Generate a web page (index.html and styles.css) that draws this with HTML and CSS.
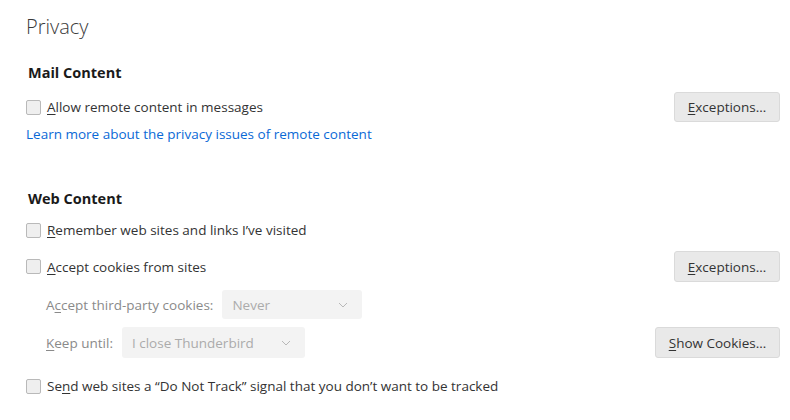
FILE: index.html
```html
<!DOCTYPE html>
<html>
<head>
<meta charset="utf-8">
<link rel="stylesheet" href="styles.css">
</head>
<body>
<div class="page">
  <h1 class="title">Privacy</h1>

  <h2 class="group">Mail Content</h2>
  <div class="row row-btn">
    <label class="check"><span class="box"></span><span><u>A</u>llow remote content in messages</span></label>
    <button class="btn btn-exc"><u>E</u>xceptions…</button>
  </div>
  <a class="link" href="#">Learn more about the privacy issues of remote content</a>

  <h2 class="group group-web">Web Content</h2>
  <div class="row row-plain">
    <label class="check"><span class="box"></span><span><u>R</u>emember web sites and links I’ve visited</span></label>
  </div>
  <div class="row row-btn row-cookies">
    <label class="check"><span class="box"></span><span><u>A</u>ccept cookies from sites</span></label>
    <button class="btn btn-exc"><u>E</u>xceptions…</button>
  </div>
  <div class="row row-sub row-third">
    <span class="sublabel">A<u>c</u>cept third-party cookies:</span>
    <span class="select select-never"><span>Never</span><svg class="chev" width="10" height="6" viewBox="0 0 10 6"><path d="M1 1 L5 5 L9 1" fill="none" stroke="#b8b8b8" stroke-width="1"/></svg></span>
  </div>
  <div class="row row-sub row-keep">
    <div class="subleft">
      <span class="sublabel"><u>K</u>eep until:</span>
      <span class="select select-keep"><span>I close Thunderbird</span><svg class="chev" width="10" height="6" viewBox="0 0 10 6"><path d="M1 1 L5 5 L9 1" fill="none" stroke="#b8b8b8" stroke-width="1"/></svg></span>
    </div>
    <button class="btn btn-show"><u>S</u>how Cookies…</button>
  </div>
  <div class="row row-plain row-send">
    <label class="check"><span class="box"></span><span>Se<u>n</u>d web sites a “Do Not Track” signal that you don’t want to be tracked</span></label>
  </div>
</div>
</body>
</html>
```
FILE: styles.css
```css
html, body {
  margin: 0;
  padding: 0;
  background: #ffffff;
}
body {
  font-family: "Open Sans", "Noto Sans", sans-serif;
  font-size: 13.5px;
  color: #333333;
}
.page {
  padding: 14px 10px 0 26px;
}
.title {
  margin: 0;
  font-size: 20px;
  font-weight: 300;
  line-height: 26px;
  color: #3a3a3a;
}
.group {
  margin: 22px 0 0 2px;
  font-size: 14.5px;
  font-weight: 700;
  line-height: 22px;
  color: #1a1a1a;
}
.group-web {
  margin-top: 44px;
}
.row {
  display: flex;
  align-items: center;
  justify-content: space-between;
}
.row-btn {
  margin-top: 8px;
  height: 30px;
}
.row-plain {
  margin-top: 8px;
  height: 24px;
}
.row-cookies {
  margin-top: 9px;
  height: 31px;
}
.row-sub {
  padding-left: 20px;
  margin-top: 8px;
}
.row-third {
  height: 29px;
  justify-content: flex-start;
}
.row-keep {
  height: 31px;
}
.row-send {
  margin-top: 16px;
}
.check {
  display: flex;
  align-items: center;
  gap: 6px;
}
.box {
  width: 13px;
  height: 13px;
  border: 1px solid #b9b9b9;
  border-radius: 2px;
  background: #efefef;
}
u {
  text-decoration: underline;
  text-underline-offset: 2px;
}
.link {
  display: block;
  margin-top: 2px;
  line-height: 20px;
  color: #0a69d6;
  text-decoration: none;
}
.btn {
  font-family: inherit;
  font-size: 13.5px;
  color: #333333;
  background: #e9e9e9;
  border: 1px solid #dadada;
  border-radius: 3px;
  padding: 0;
  height: 100%;
}
.btn-exc {
  width: 106px;
}
.btn-show {
  width: 125px;
}
.subleft {
  display: flex;
  align-items: center;
  height: 100%;
}
.sublabel {
  color: #8a8a8a;
}
.select {
  display: flex;
  align-items: center;
  justify-content: space-between;
  box-sizing: border-box;
  height: 100%;
  margin-left: 9px;
  padding: 0 14px 0 10px;
  background: #f3f3f3;
  border-radius: 3px;
  color: #ababab;
}
.select-never {
  width: 140px;
}
.select-keep {
  width: 183px;
}
.chev {
  display: block;
}
```
